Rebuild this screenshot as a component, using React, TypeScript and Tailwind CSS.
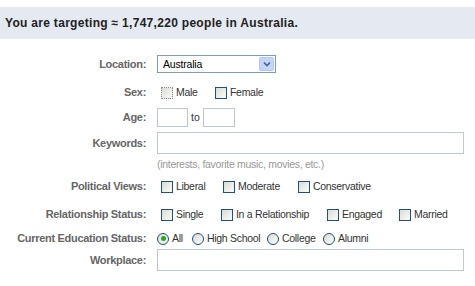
import React from "react";

const font = { fontFamily: '"Liberation Sans", Arial, sans-serif' };

function Box({ dotted }: { dotted?: boolean }) {
  return (
    <span
      className={
        "inline-block w-[12px] h-[12px] shrink-0 bg-gradient-to-br from-[#dcdcd5] to-[#fbfbf9] " +
        (dotted ? "border border-dotted border-[#8a8a8a]" : "border border-[#1c5180]")
      }
    />
  );
}

function Radio({ checked }: { checked?: boolean }) {
  return (
    <span className="inline-flex items-center justify-center w-[12px] h-[12px] shrink-0 rounded-full border border-[#1c5180] bg-gradient-to-br from-[#dcdcd5] to-[#fbfbf9]">
      {checked && <span className="block w-[5px] h-[5px] rounded-full bg-[#2aa52a]" />}
    </span>
  );
}

const opt = "ml-[3px] text-[10.5px] tracking-[-0.3px] text-[#333] leading-none whitespace-nowrap";

function Check({ label, w, dotted }: { label: string; w?: string; dotted?: boolean }) {
  return (
    <div className={"flex items-center " + (w ?? "")}>
      <Box dotted={dotted} />
      <span className={opt}>{label}</span>
    </div>
  );
}

function Rad({ label, w, checked }: { label: string; w?: string; checked?: boolean }) {
  return (
    <div className={"flex items-center " + (w ?? "")}>
      <Radio checked={checked} />
      <span className={opt}>{label}</span>
    </div>
  );
}

function Row({ label, children, cls, pl }: { label?: string; children: React.ReactNode; cls: string; pl?: string }) {
  return (
    <div className={"flex items-center " + cls}>
      <div className="w-[146px] text-right text-[11px] tracking-[-0.3px] font-bold text-[#666] leading-none whitespace-nowrap">{label}</div>
      <div className={"ml-[11px] flex items-center h-full " + (pl ?? "")}>{children}</div>
    </div>
  );
}

export default function App() {
  return (
    <div className="w-[475px] h-[286px] bg-white overflow-hidden" style={font}>
      <div className="mt-[7px] h-[32px] bg-[#e5e9f2] flex items-center pl-[5px]">
        <span className="text-[12px] tracking-[0.3px] font-bold text-[#222] whitespace-nowrap">You are targeting ≈ 1,747,220 people in Australia.</span>
      </div>

      <Row label="Location:" cls="mt-[16px] h-[18px]">
        <div className="w-[119px] h-[18px] border border-[#7f9db9] bg-white flex items-center justify-between pl-[5px] pr-[1px]">
          <span className="text-[10.5px] tracking-[-0.2px] text-black leading-none">Australia</span>
          <span className="w-[15px] h-[14px] rounded-[2px] bg-[#c3d3fd] border border-[#b5c8f2] flex items-center justify-center">
            <svg width="8" height="6" viewBox="0 0 8 6">
              <path d="M1 1.5 L4 4.5 L7 1.5" stroke="#4d6185" strokeWidth="1.6" fill="none" />
            </svg>
          </span>
        </div>
      </Row>

      <Row label="Sex:" cls="mt-[13px] h-[13px]" pl="pl-[4px]">
        <Check label="Male" w="w-[54px]" dotted />
        <Check label="Female" />
      </Row>

      <Row label="Age:" cls="mt-[9px] h-[19px]">
        <div className="w-[31px] h-[19px] border border-[#bdc7d8]" />
        <span className="mx-[3px] text-[10.5px] text-[#333] leading-none">to</span>
        <div className="w-[32px] h-[19px] border border-[#bdc7d8]" />
      </Row>

      <Row label="Keywords:" cls="mt-[5px] h-[22px]">
        <div className="w-[307px] h-[22px] border border-[#bdc7d8]" />
      </Row>

      <Row cls="mt-[4px] h-[13px]">
        <span className="text-[10.5px] tracking-[-0.3px] text-[#999] leading-none whitespace-nowrap">(interests, favorite music, movies, etc.)</span>
      </Row>

      <Row label="Political Views:" cls="mt-[9px] h-[13px]" pl="pl-[4px]">
        <Check label="Liberal" w="w-[62px]" />
        <Check label="Moderate" w="w-[75px]" />
        <Check label="Conservative" />
      </Row>

      <Row label="Relationship Status:" cls="mt-[15px] h-[13px]" pl="pl-[4px]">
        <Check label="Single" w="w-[60px]" />
        <Check label="In a Relationship" w="w-[106px]" />
        <Check label="Engaged" w="w-[72px]" />
        <Check label="Married" />
      </Row>

      <Row label="Current Education Status:" cls="mt-[11px] h-[13px]">
        <Rad label="All" w="w-[35px]" checked />
        <Rad label="High School" w="w-[75px]" />
        <Rad label="College" w="w-[56px]" />
        <Rad label="Alumni" />
      </Row>

      <Row label="Workplace:" cls="mt-[4px] h-[22px]">
        <div className="w-[307px] h-[22px] border border-[#bdc7d8]" />
      </Row>
    </div>
  );
}
